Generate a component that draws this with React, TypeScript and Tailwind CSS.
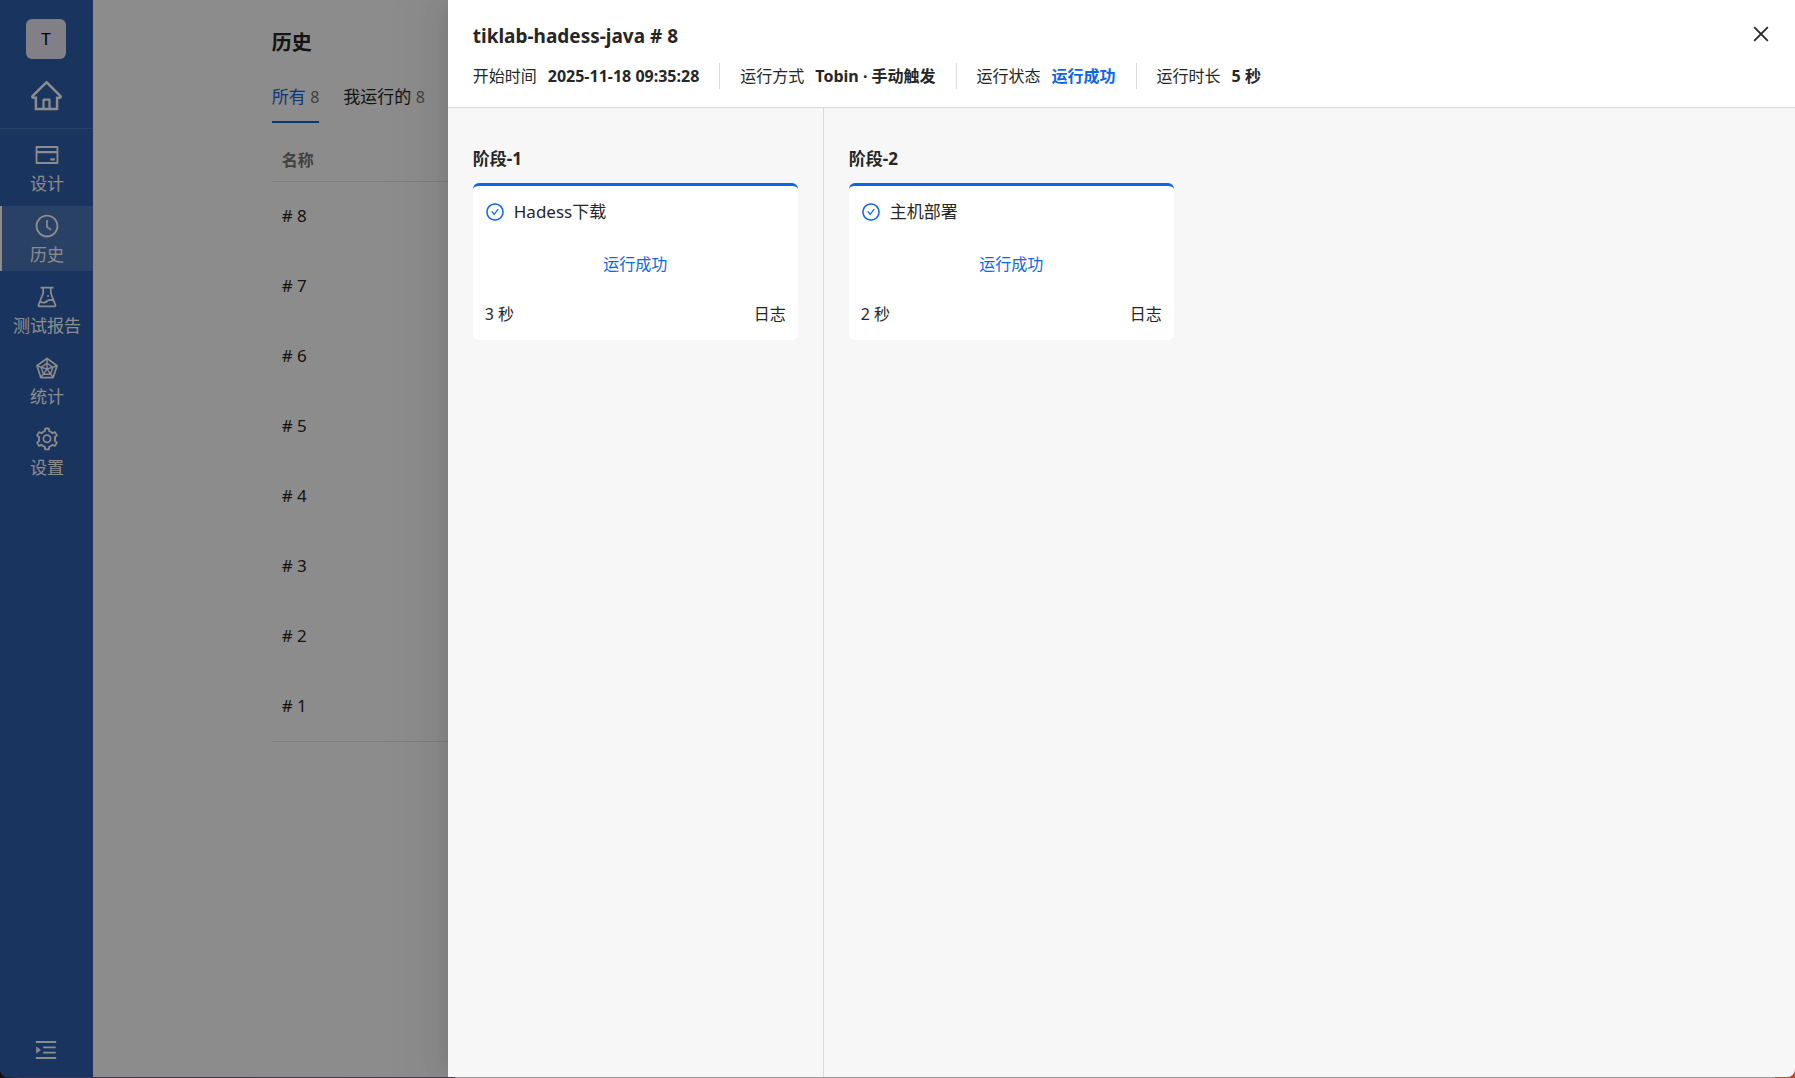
import {
  AiOutlineCheckCircle,
  AiOutlineClockCircle,
  AiOutlineClose,
  AiOutlineCreditCard,
  AiOutlineExperiment,
  AiOutlineHome,
  AiOutlineMenuUnfold,
  AiOutlineRadarChart,
  AiOutlineSetting,
} from "react-icons/ai";

const navItems = [
  { label: "设计", Icon: AiOutlineCreditCard, active: false },
  { label: "历史", Icon: AiOutlineClockCircle, active: true },
  { label: "测试报告", Icon: AiOutlineExperiment, active: false },
  { label: "统计", Icon: AiOutlineRadarChart, active: false },
  { label: "设置", Icon: AiOutlineSetting, active: false },
];

const runs = [8, 7, 6, 5, 4, 3, 2, 1];

const facts = [
  { label: "开始时间", value: "2025-11-18 09:35:28", highlight: false },
  { label: "运行方式", value: "Tobin · 手动触发", highlight: false },
  { label: "运行状态", value: "运行成功", highlight: true },
  { label: "运行时长", value: "5 秒", highlight: false },
];

const stages = [
  { name: "阶段-1", task: "Hadess下载", status: "运行成功", time: "3 秒" },
  { name: "阶段-2", task: "主机部署", status: "运行成功", time: "2 秒" },
];

function Sidebar() {
  return (
    <aside className="flex w-[93px] shrink-0 flex-col bg-[#3060b0] text-white">
      <div className="flex flex-col items-center border-b border-white/15 pt-[19px] pr-px pb-[15px]">
        <button className="flex size-10 items-center justify-center rounded-md bg-[#ebe9f4] text-[17px] text-black">
          T
        </button>
        <a href="#home" aria-label="首页" className="mt-[19px]">
          <AiOutlineHome className="size-[35px]" />
        </a>
      </div>
      <nav className="mt-1.5 flex flex-1 flex-col gap-1.5">
        {navItems.map(({ label, Icon, active }) => (
          <a
            key={label}
            href={"#" + label}
            className={
              active
                ? "flex flex-col items-center gap-1 border-l-2 border-white bg-white/15 pt-[7px] pr-px pb-1"
                : "flex flex-col items-center gap-1 border-l-2 border-transparent pt-[7px] pr-px pb-1"
            }
          >
            <Icon className="size-[26px]" />
            <span className="text-[17px] leading-6 whitespace-nowrap">{label}</span>
          </a>
        ))}
      </nav>
      <button aria-label="展开菜单" className="flex justify-center pr-px pb-[14px]">
        <AiOutlineMenuUnfold className="size-[26px]" />
      </button>
    </aside>
  );
}

function HistoryPage() {
  return (
    <main className="flex-1 bg-white">
      <div className="mx-auto w-[79%] pt-[25px]">
        <h1 className="text-xl leading-9 font-bold">历史</h1>
        <div className="mt-3 flex gap-6">
          <button className="border-b-2 border-[#0d66e4] py-3 text-[17px] leading-6 text-[#0d66e4]">
            所有 <span className="text-base text-[#777]">8</span>
          </button>
          <button className="border-b-2 border-transparent py-3 text-[17px] leading-6">
            我运行的 <span className="text-base text-[#777]">8</span>
          </button>
        </div>
        <table className="mt-4 w-full border-b border-[#e4e4e4] text-left">
          <thead>
            <tr className="h-[42px] border-b border-[#e4e4e4]">
              <th className="px-2.5 text-base leading-6 font-bold text-[#777]">名称</th>
            </tr>
          </thead>
          <tbody>
            {runs.map((n) => (
              <tr key={n} className="h-[70px]">
                <td className="px-2.5 text-[17px] leading-6"># {n}</td>
              </tr>
            ))}
          </tbody>
        </table>
      </div>
    </main>
  );
}

function RunDrawer() {
  return (
    <section
      role="dialog"
      aria-labelledby="run-title"
      className="flex h-full w-[calc(75%+1px)] flex-col bg-[#f7f7f7] shadow-[-6px_0_16px_-8px_rgba(0,0,0,0.08),-9px_0_28px_0_rgba(0,0,0,0.05),-12px_0_48px_16px_rgba(0,0,0,0.03)]"
    >
      <header className="border-b border-[#d9d9d9] bg-white pt-5 pr-[23px] pb-[18px] pl-[25px]">
        <div className="flex items-start justify-between">
          <h2 id="run-title" className="text-[19px] leading-8 font-bold">
            tiklab-hadess-java # 8
          </h2>
          <button aria-label="关闭" className="mt-[3px]">
            <AiOutlineClose className="size-[22px]" />
          </button>
        </div>
        <dl className="mt-[11px] flex items-center text-base leading-[26px]">
          {facts.map((f) => (
            <div
              key={f.label}
              className="flex gap-[11px] border-l border-[#d9d9d9] px-5 first:border-l-0 first:pl-0"
            >
              <dt>{f.label}</dt>
              <dd className={f.highlight ? "font-bold text-[#0d66e4]" : "font-bold"}>{f.value}</dd>
            </div>
          ))}
        </dl>
      </header>
      <div className="flex flex-1">
        {stages.map((s) => (
          <section
            key={s.name}
            className="w-[376px] border-r border-[#d9d9d9] px-[25px] pt-9 last:border-transparent"
          >
            <h3 className="text-[17px] leading-[30px] font-bold">{s.name}</h3>
            <div className="mt-[9px] rounded-md border-t-3 border-[#0d66e4] bg-white p-3">
              <div className="flex items-center gap-[9px] text-[17px] leading-7">
                <AiOutlineCheckCircle className="size-5 text-[#0d66e4]" />
                {s.task}
              </div>
              <p className="mt-6 text-center text-base leading-7 text-[#0d66e4]">{s.status}</p>
              <div className="mt-[22px] flex justify-between text-base leading-7">
                <span>{s.time}</span>
                <button>日志</button>
              </div>
            </div>
          </section>
        ))}
      </div>
    </section>
  );
}

export default function App() {
  return (
    <div className="min-h-screen bg-[linear-gradient(to_right,#140c18_0,#3d3350_20px,#4a3558_455px,#999_455px,#999_calc(100%-20px),#c8472b_calc(100%-20px))] pb-px font-['Noto_Sans','Noto_Sans_CJK_SC',sans-serif] text-[#262626]">
      <div className="relative flex min-h-[calc(100vh-1px)] overflow-hidden rounded-b-lg">
        <Sidebar />
        <HistoryPage />
        <div className="absolute inset-0 flex justify-end bg-black/45">
          <RunDrawer />
        </div>
      </div>
    </div>
  );
}
